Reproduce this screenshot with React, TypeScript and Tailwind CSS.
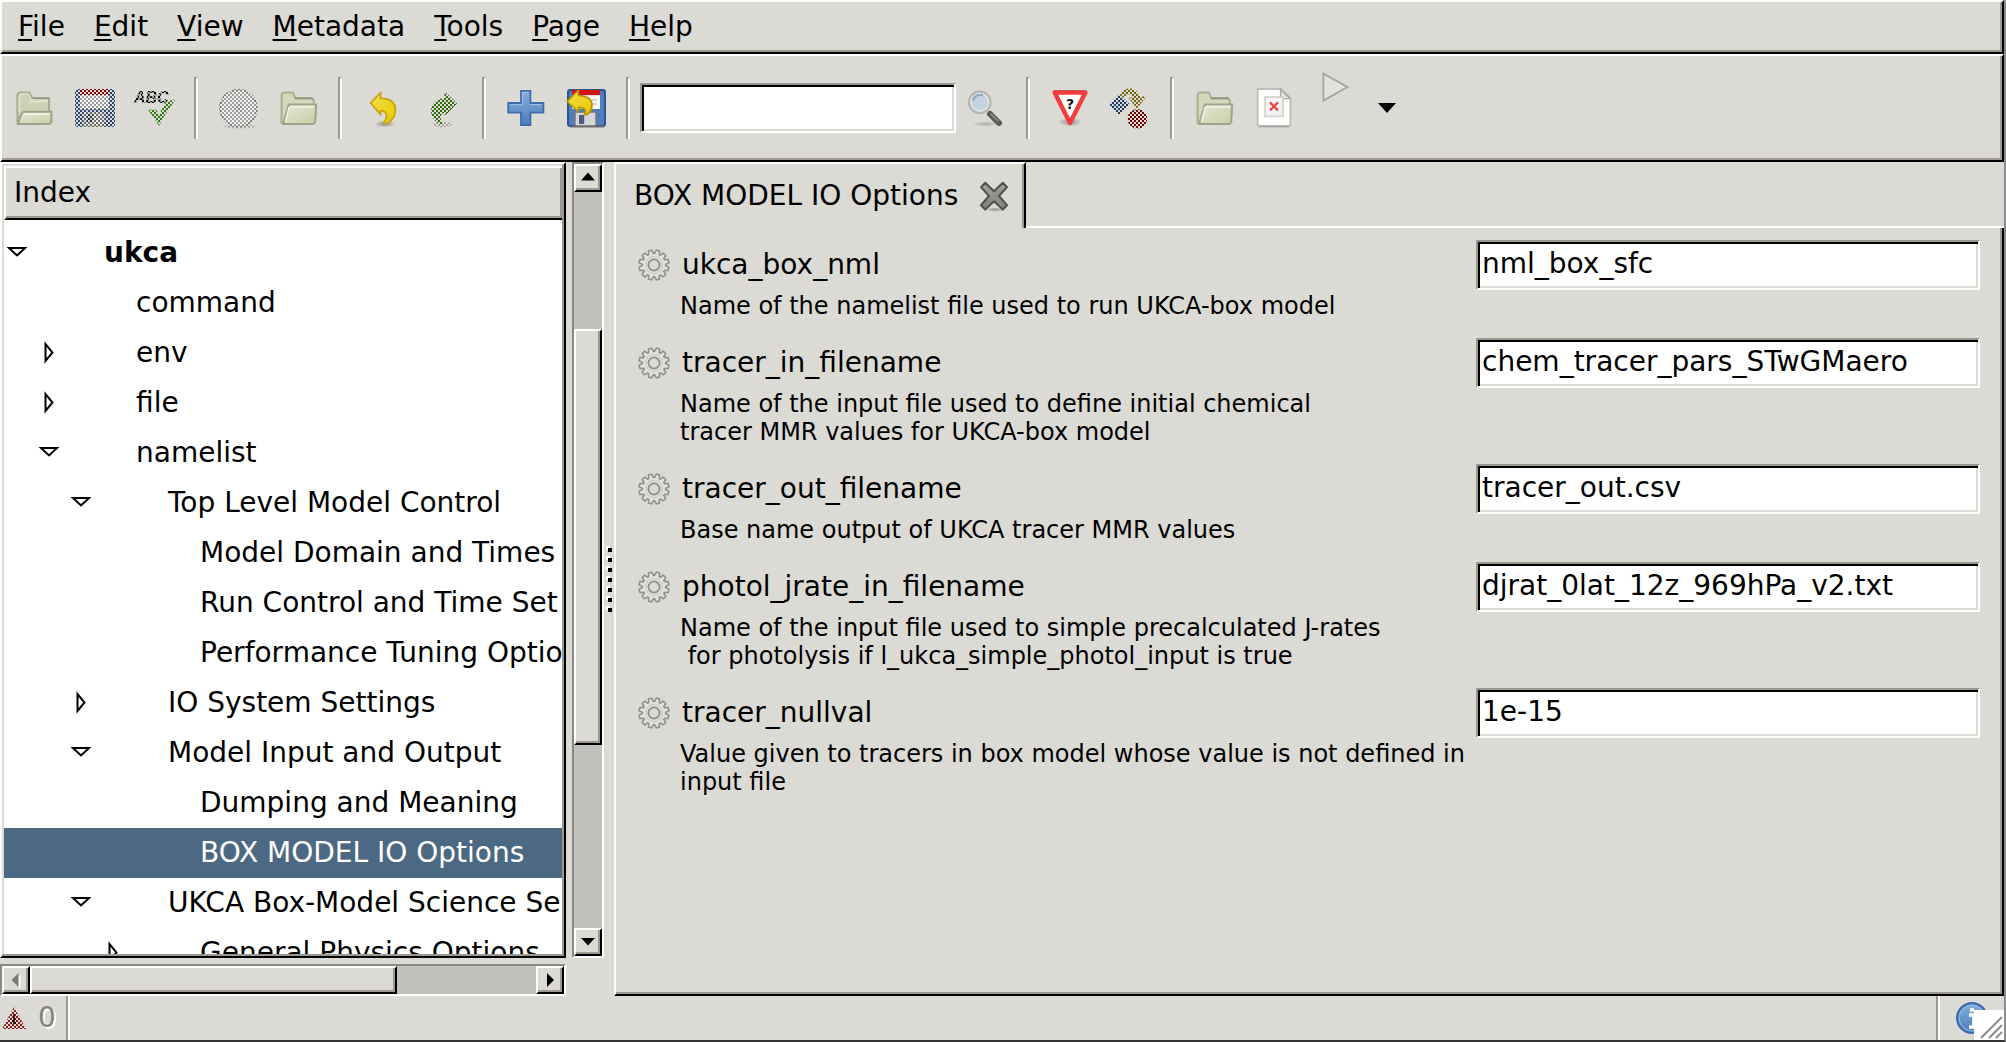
import type { ReactNode } from "react";
import clsx from "clsx";

const raised =
  "border-2 border-t-white border-l-white border-r-black border-b-black shadow-[inset_-2px_-2px_0_#9d988e] bg-[#dbdad5]";
const sunken =
  "border-2 border-t-[#9d988e] border-l-[#9d988e] border-r-white border-b-white shadow-[inset_2px_2px_0_#000,inset_-2px_-2px_0_#dbdad5] bg-white outline-none";

const menus = ["File", "Edit", "View", "Metadata", "Tools", "Page", "Help"];

type Node = { label: string; depth: number; state?: "open" | "closed"; bold?: boolean; selected?: boolean };

const tree: Node[] = [
  { label: "ukca", depth: 0, state: "open", bold: true },
  { label: "command", depth: 1 },
  { label: "env", depth: 1, state: "closed" },
  { label: "file", depth: 1, state: "closed" },
  { label: "namelist", depth: 1, state: "open" },
  { label: "Top Level Model Control", depth: 2, state: "open" },
  { label: "Model Domain and Times", depth: 3 },
  { label: "Run Control and Time Set", depth: 3 },
  { label: "Performance Tuning Optio", depth: 3 },
  { label: "IO System Settings", depth: 2, state: "closed" },
  { label: "Model Input and Output", depth: 2, state: "open" },
  { label: "Dumping and Meaning", depth: 3 },
  { label: "BOX MODEL IO Options", depth: 3, selected: true },
  { label: "UKCA Box-Model Science Se", depth: 2, state: "open" },
  { label: "General Physics Options", depth: 3, state: "closed" },
];

const indent = ["w-0", "w-8", "w-16", "w-24"];

const fields = [
  { name: "ukca_box_nml", value: "nml_box_sfc", help: "Name of the namelist file used to run UKCA-box model" },
  {
    name: "tracer_in_filename",
    value: "chem_tracer_pars_STwGMaero",
    help: "Name of the input file used to define initial chemical\ntracer MMR values for UKCA-box model",
  },
  { name: "tracer_out_filename", value: "tracer_out.csv", help: "Base name output of UKCA tracer MMR values" },
  {
    name: "photol_jrate_in_filename",
    value: "djrat_0lat_12z_969hPa_v2.txt",
    help: "Name of the input file used to simple precalculated J-rates\n for photolysis if l_ukca_simple_photol_input is true",
  },
  {
    name: "tracer_nullval",
    value: "1e-15",
    help: "Value given to tracers in box model whose value is not defined in\ninput file",
  },
];

// shared masks and gradients, referenced by id from the icons below
function Defs() {
  return (
    <svg width="0" height="0" className="absolute" aria-hidden="true">
      <defs>
        <pattern id="checker" width="2" height="2" patternUnits="userSpaceOnUse">
          <path d="M0 0h1v1h-1zM1 1h1v1h-1z" fill="#fff" shapeRendering="crispEdges" />
        </pattern>
        <mask id="dither" maskUnits="userSpaceOnUse" x="0" y="0" width="24" height="24">
          <rect width="24" height="24" fill="url(#checker)" />
        </mask>
        <linearGradient id="folder" x1="0" y1="0" x2="1" y2="1">
          <stop offset="0" stopColor="#e4e6d4" />
          <stop offset="1" stopColor="#c9cfa6" />
        </linearGradient>
        <linearGradient id="gold" x1="0" y1="0" x2="1" y2="1">
          <stop offset="0" stopColor="#f3e04e" />
          <stop offset="1" stopColor="#e8c800" />
        </linearGradient>
        <linearGradient id="blue" x1="0" y1="0" x2="0" y2="1">
          <stop offset="0" stopColor="#86aedb" />
          <stop offset="1" stopColor="#4a7dbb" />
        </linearGradient>
        <linearGradient id="steel" x1="0" y1="0" x2="0" y2="1">
          <stop offset="0" stopColor="#a0a39e" />
          <stop offset="1" stopColor="#7c807b" />
        </linearGradient>
        <radialGradient id="shade">
          <stop offset="0" stopColor="#000" stopOpacity="0.35" />
          <stop offset="1" stopColor="#000" stopOpacity="0" />
        </radialGradient>
      </defs>
    </svg>
  );
}

function Icon({ children }: { children: ReactNode }) {
  return (
    <svg viewBox="0 0 24 24" className="size-12" aria-hidden="true">
      {children}
    </svg>
  );
}

function FolderOpen() {
  return (
    <Icon>
      <path d="M3.7 19.5V5.2l1-1h5l1.4 2.9h8.4v9.4H3.7z" fill="#cdd2b2" stroke="#a9ad93" strokeWidth="1" />
      <path d="M4.6 14V6l.7-1h4l1.3 2.9h8v1H9.5" fill="none" stroke="#eceee0" strokeWidth=".5" />
      <path d="M11.5 7.200h8" stroke="#8d9279" strokeWidth=".8" />
      <path d="M6.6 13.9h14.1v5l-.9 1.1H4l1.3-4.2z" fill="url(#folder)" stroke="#9ea38b" strokeWidth="1" />
      <path d="M7.2 15h12.6" stroke="#f4f5ea" strokeWidth=".8" />
    </Icon>
  );
}

function Folder() {
  return (
    <Icon>
      <path d="M3.8 19.5V5.2l1-1h4.6l1.3 2.9h8l1.2 1V19.5z" fill="#d3d7bc" stroke="#a9ad93" strokeWidth="1" />
      <path d="M10.5 7.200h9" stroke="#8d9279" strokeWidth=".8" />
      <path d="M7.4 10.3h13.7l-.5 8.8-.9.9H4.6z" fill="url(#folder)" stroke="#9ea38b" strokeWidth="1" />
      <path d="M8 11.3h12M7.6 11.5L5.8 18.8" stroke="#f2f3e6" strokeWidth=".8" fill="none" />
    </Icon>
  );
}

function FloppyBody() {
  return (
    <>
      <rect x="3" y="3" width="18.5" height="18" rx="1" fill="#4e7ec0" stroke="#2d568f" strokeWidth="1" />
      <rect x="5" y="3" width="14" height="2.6" fill="#d80f0f" />
      <rect x="5" y="5.6" width="14" height="6.9" fill="#f7f7f7" />
      <path d="M6.5 8h11M6.5 10h11" stroke="#c9c9c9" strokeWidth=".8" />
      <rect x="6.5" y="14" width="10.5" height="7" rx=".6" fill="#d6d6d6" stroke="#777" strokeWidth=".7" />
      <rect x="8.5" y="15.5" width="2.6" height="4.5" fill="#4a5f80" />
      <path d="M4 21.3h17" stroke="#6e6e6e" strokeWidth=".8" />
    </>
  );
}

function Save() {
  return (
    <Icon>
      <path d="M5 5.500h14.500v7H5z" fill="#fff" opacity=".8" />
      <path d="M11.500 15h5v5.500h-5z" fill="#fff" opacity=".5" />
      <g mask="url(#dither)">
        <rect x="3" y="3" width="19" height="18" rx="1" fill="#26466f" stroke="#26466f" strokeWidth="1" />
        <rect x="5" y="2.5" width="14.5" height="3" fill="#7c0404" />
        <rect x="5" y="5.5" width="14.5" height="7" fill="#999" />
        <rect x="6.5" y="14" width="11" height="7.5" rx="1" fill="#6c6c6c" />
        <rect x="8.5" y="15" width="3" height="4" fill="#1c3350" />
      </g>
    </Icon>
  );
}

function SpellCheck() {
  return (
    <Icon>
      <text x="2" y="9.300" fontFamily="Liberation Sans, sans-serif" fontSize="8" fontStyle="italic" fontWeight="bold" fill="#555" opacity=".5">
        ABC
      </text>
      <g mask="url(#dither)">
        <text x="2" y="9.300" fontFamily="Liberation Sans, sans-serif" fontSize="8" fontStyle="italic" fontWeight="bold" fill="#000">
          ABC
        </text>
        <path d="M9.8 13.2h3l1.7 3.2 3.6-6.9 3.7-1.3-6 9-1.3 2.8z" fill="#2f7a0c" stroke="#2f7a0c" strokeWidth=".9" />
      </g>
    </Icon>
  );
}

function Disc() {
  return (
    <Icon>
      <circle cx="12.2" cy="12.1" r="9" fill="#fff" opacity=".6" />
      <g mask="url(#dither)">
        <ellipse cx="13" cy="21.3" rx="8" ry=".9" fill="#aaa" />
        <circle cx="12.2" cy="12.1" r="9.2" fill="#a0a0a0" stroke="#707070" strokeWidth=".8" />
        <circle cx="12.2" cy="12.1" r="2" fill="#888" />
      </g>
    </Icon>
  );
}

function Undo() {
  return (
    <Icon>
      <ellipse cx="13.5" cy="20" rx="5.5" ry="1.8" fill="url(#shade)" />
      <path
        d="M6.3 9.5l5-5.2v2.9c5 0 7.400 2 7.400 5.800 0 3.200-1.500 5.200-4 6.700l-2-.3c2.200-2.400 2.300-6.100-1.400-6.100v2z"
        fill="url(#gold)"
        stroke="#c9a40c"
        strokeWidth=".9"
        strokeLinejoin="round"
      />
    </Icon>
  );
}

function Redo() {
  return (
    <Icon>
      <g mask="url(#dither)">
        <ellipse cx="12" cy="20.300" rx="5" ry="1.400" fill="#aaa" />
        <path
          d="M19.300 9.700l-5.800-5.700v3.200c-4.500.4-6.800 3-6.700 6.500 0 2.800 1.700 4.800 4 6.300l1.200-.2c-1.300-2.300-1.500-5.300 1.500-5.800v1.500z"
          fill="#2f6a0c"
          stroke="#2f6a0c"
          strokeWidth=".5"
        />
      </g>
    </Icon>
  );
}

function Add() {
  return (
    <Icon>
      <path
        d="M9.500 3.400h4.700v6.100h6.500v4.800h-6.500v6.300h-4.700v-6.300h-6.400v-4.800h6.400z"
        fill="url(#blue)"
        stroke="#3d6cab"
        strokeWidth=".9"
      />
      <path d="M10.300 4.200h3M4 10.300h6.200v-6M14 10.300h6" stroke="#a3c1e6" strokeWidth=".5" fill="none" />
    </Icon>
  );
}

function Revert() {
  return (
    <Icon>
      <FloppyBody />
      <path
        d="M2.500 8.700l5.700-5.700v2.700c4.500.3 6.800 2 6.800 5 0 2-1 3.600-2.800 4.700h-1c1-2 .8-3.700-3-3.700v2.300z"
        fill="url(#gold)"
        stroke="#b59207"
        strokeWidth=".8"
        strokeLinejoin="round"
      />
    </Icon>
  );
}

function Search() {
  return (
    <Icon>
      <ellipse cx="12" cy="20" rx="7" ry="1.500" fill="url(#shade)" opacity=".6" />
      <path d="M14 15l4.500 4.500" stroke="#565b56" strokeWidth="3" strokeLinecap="round" />
      <path d="M14.500 15l3.500 3.500" stroke="#90948f" strokeWidth=".8" strokeLinecap="round" />
      <circle cx="8.900" cy="9.200" r="5.300" fill="#c4d3e2" stroke="#b4b5b0" strokeWidth="1.200" />
      <circle cx="8.900" cy="9.200" r="4.400" fill="none" stroke="#e4e5e2" strokeWidth=".8" />
      <path d="M5.500 8.500a3.500 3.500 0 0 1 5-2.700" stroke="#8fa3b8" strokeWidth="1" fill="none" />
    </Icon>
  );
}

function Validate() {
  return (
    <Icon>
      <ellipse cx="12" cy="19" rx="6" ry="2.200" fill="url(#shade)" />
      <path d="M4.300 4.300h15.400l-7.700 15.200z" fill="#fff" stroke="#f53b3b" strokeWidth="2.200" strokeLinejoin="round" />
      <path d="M3.700 3.300h16.600" stroke="#b33" strokeWidth=".6" opacity=".6" />
      <text x="12" y="12.400" textAnchor="middle" fontFamily="DejaVu Sans, sans-serif" fontSize="7" fontWeight="bold" fill="#111">
        ?
      </text>
    </Icon>
  );
}

function Transform() {
  return (
    <Icon>
      <g mask="url(#dither)">
        <path d="M6.500 5l5.500 5.300-5.500 5.200-5-5.200z" fill="#1d3c63" />
        <path d="M7 5.500c2-4.500 8-4.500 10 .7h3.200l-4.700 6-4.300-5.300 2.300-.3c-1-2-3-2-4.500.3z" fill="#75640a" />
        <circle cx="15.700" cy="17.400" r="4.900" fill="#6c0404" />
      </g>
    </Icon>
  );
}

function Missing() {
  return (
    <Icon>
      <path d="M4 2.500h11.500l4.700 4.500v13.300l-.7.700H4.500l-.7-.7V2.500z" fill="#fff" stroke="#bdbdb9" strokeWidth=".9" />
      <path d="M4.500 21.300h15" stroke="#a4a4a0" strokeWidth=".7" />
      <path d="M15.300 2.700v4.600h4.700z" fill="#e4e4e2" stroke="#a9a9a5" strokeWidth=".7" />
      <rect x="7.500" y="6.500" width="9" height="9.700" fill="#f3f3f3" stroke="#cfcfcb" strokeWidth=".8" />
      <path d="M10 9.200l4 4M14 9.200l-4 4" stroke="#f04545" strokeWidth="1.100" />
    </Icon>
  );
}

function Play() {
  return (
    <Icon>
      <path d="M6.700 4.800v13.500l12-6.800z" fill="#e2e2df" stroke="#a5a5a0" strokeWidth=".9" />
    </Icon>
  );
}

function Gear() {
  const teeth = Array.from({ length: 12 }, (_, i) => i * 30);
  return (
    <svg viewBox="0 0 16 16" className="size-8" aria-hidden="true">
      {teeth.map((a) => (
        <path key={a} d="M6.600 2.800l.6-2.300h1.600l.6 2.300" fill="#e0e0dd" stroke="#91918b" strokeWidth=".8" transform={`rotate(${a + 15} 8 8)`} />
      ))}
      <circle cx="8" cy="8" r="5.400" fill="#e0e0dd" />
      <circle cx="8" cy="8" r="4.200" fill="none" stroke="#cbcbc6" strokeWidth=".6" />
      <circle cx="8" cy="8" r="2.800" fill="#dbdad5" stroke="#8f8f89" strokeWidth=".9" />
    </svg>
  );
}

function Close() {
  return (
    <svg viewBox="0 0 16 16" className="size-8" aria-hidden="true">
      <ellipse cx="8.500" cy="14.800" rx="5" ry="1.200" fill="url(#shade)" />
      <path
        d="M3.600 1.400L8 5.600l4.400-4.200 2.100 2.200-4 4.400 4 4.600-2.100 2.200L8 10.600l-4.400 4.200-2.100-2.200 4-4.600-4-4.400z"
        fill="url(#steel)"
        stroke="#4d524f"
        strokeWidth="1"
        strokeLinejoin="round"
      />
    </svg>
  );
}

function Triangle({ dir, muted }: { dir: "up" | "down" | "left" | "right"; muted?: boolean }) {
  const paths = {
    up: "M7 .5l7 8H0z",
    down: "M7 9.500l7-7.500H0z",
    left: "M2.500 6l7-7v14z",
    right: "M11 6l-7-7v14z",
  };
  return (
    <svg viewBox="0 0 14 12" className="h-3 w-[14px] overflow-visible" aria-hidden="true">
      {muted && <path d={paths[dir]} fill="#fff" transform="translate(2 2)" />}
      <path d={paths[dir]} fill={muted ? "#7d7a74" : "#000"} />
    </svg>
  );
}

function Expander({ state }: { state: "open" | "closed" }) {
  return (
    <svg viewBox="0 0 24 24" className="size-6" aria-hidden="true">
      <path
        d={state === "open" ? "M4 7h16l-8 7.500z" : "M8.500 3v17l7-8.500z"}
        fill="#fff"
        stroke="#000"
        strokeWidth="2"
      />
    </svg>
  );
}

function Separator() {
  return (
    <div className="flex h-[62px] w-6 shrink-0 justify-center">
      <div className="w-1 border-t-2 border-l-2 border-r-2 border-t-[#9d988e] border-l-[#9d988e] border-r-white" />
    </div>
  );
}

function Tool({ label, children }: { label: string; children: ReactNode }) {
  return (
    <button type="button" aria-label={label} className="flex w-[60px] shrink-0 justify-center">
      {children}
    </button>
  );
}

function Toolbar() {
  return (
    <div className={clsx(raised, "flex h-[108px] items-center pl-[2px]")}>
      <Tool label="Open"><FolderOpen /></Tool>
      <Tool label="Save"><Save /></Tool>
      <Tool label="Check and save"><SpellCheck /></Tool>
      <Separator />
      <Tool label="Load all"><Disc /></Tool>
      <Tool label="Browse files"><Folder /></Tool>
      <Separator />
      <Tool label="Undo"><Undo /></Tool>
      <Tool label="Redo"><Redo /></Tool>
      <Separator />
      <Tool label="Add"><Add /></Tool>
      <Tool label="Revert"><Revert /></Tool>
      <Separator />
      <input type="text" aria-label="Find" className={clsx(sunken, "h-[50px] w-[316px] px-2")} />
      <Tool label="Find next"><Search /></Tool>
      <Separator />
      <Tool label="Check fail-if"><Validate /></Tool>
      <Tool label="Auto-fix"><Transform /></Tool>
      <Separator />
      <Tool label="View output"><Folder /></Tool>
      <Tool label="View log"><Missing /></Tool>
      <div className="self-start pt-2">
        <Tool label="Run suite"><Play /></Tool>
      </div>
      <button type="button" aria-label="Run options" className="flex w-[46px] justify-center">
        <svg viewBox="0 0 18 10" className="h-[10px] w-[18px]" aria-hidden="true">
          <path d="M0 0h18l-9 10z" />
        </svg>
      </button>
    </div>
  );
}

function ScrollButton({ label, children }: { label: string; children: ReactNode }) {
  return (
    <button type="button" aria-label={label} className={clsx(raised, "flex size-7 shrink-0 items-center justify-center")}>
      {children}
    </button>
  );
}

const trough = "border-2 border-t-[#8a8882] border-l-[#8a8882] border-r-white border-b-white bg-[#c3c1bb]";

function IndexPane() {
  return (
    <aside className="grid w-[604px] shrink-0 grid-cols-[minmax(0,1fr)_32px] grid-rows-[minmax(0,1fr)_32px] gap-[6px]">
      <div className={clsx(raised, "flex min-h-0 flex-col p-[2px]")}>
        <div className={clsx(raised, "h-[54px] shrink-0 border-r-0 px-2 leading-[50px]")}>Index</div>
        <ul className="min-h-0 flex-1 overflow-hidden bg-white pt-2">
          {tree.map((node) => (
            <li
              key={node.label}
              className={clsx("flex h-[50px] items-center whitespace-nowrap", node.selected && "bg-[#4b6983] text-white", node.bold && "font-bold")}
            >
              <span className={clsx("shrink-0", indent[node.depth])} />
              <span className="flex w-[100px] shrink-0 pl-[1px]">
                {node.state && (
                  <button type="button" aria-label={`Toggle ${node.label}`}>
                    <Expander state={node.state} />
                  </button>
                )}
              </span>
              <span>{node.label}</span>
            </li>
          ))}
        </ul>
      </div>
      <div className={clsx(trough, "flex flex-col")}>
        <ScrollButton label="Scroll up"><Triangle dir="up" /></ScrollButton>
        <div className="grow-[138] basis-0" />
        <div className={clsx(raised, "grow-[414] basis-0")} />
        <div className="grow-[184] basis-0" />
        <ScrollButton label="Scroll down"><Triangle dir="down" /></ScrollButton>
      </div>
      <div className={clsx(trough, "flex")}>
        <ScrollButton label="Scroll left"><Triangle dir="left" muted /></ScrollButton>
        <div className={clsx(raised, "grow-[366] basis-0")} />
        <div className="grow-[140] basis-0" />
        <ScrollButton label="Scroll right"><Triangle dir="right" /></ScrollButton>
      </div>
    </aside>
  );
}

function Handle() {
  return (
    <div className="flex w-[10px] shrink-0 flex-col items-center justify-center gap-1">
      {[0, 1, 2, 3, 4, 5, 6].map((i) => (
        <svg key={i} viewBox="0 0 6 6" className="size-[6px]" aria-hidden="true">
          <path d="M0 0h4v4h-4z" fill="#fff" />
          <path d="M2 2h4v4h-4z" />
        </svg>
      ))}
    </div>
  );
}

function Field({ name, value, help }: { name: string; value: string; help: string }) {
  return (
    <div className="grid grid-cols-[minmax(0,1fr)_504px] pt-[10px] pb-2">
      <div className="flex items-center gap-3 pl-[22px]">
        <button type="button" aria-label={`${name} menu`}>
          <Gear />
        </button>
        <label htmlFor={name}>{name}</label>
      </div>
      <input id={name} type="text" defaultValue={value} className={clsx(sunken, "h-[50px] w-full px-1 pb-1")} />
      <p className="pt-[2px] pl-16 text-[24px] leading-7 whitespace-pre">{help}</p>
    </div>
  );
}

function Notebook() {
  return (
    <main className="flex min-w-0 flex-1 flex-col">
      <div className="flex h-[66px] shrink-0">
        <div className="flex items-center gap-5 border-t-2 border-r-2 border-l-2 border-t-white border-r-black border-l-white pr-[14px] pl-[18px] shadow-[inset_-2px_0_0_#9d988e]">
          <span>BOX MODEL IO Options</span>
          <button type="button" aria-label="Close tab">
            <Close />
          </button>
        </div>
        <div className="flex-1 border-b-2 border-b-white" />
      </div>
      <div className="min-h-0 flex-1 border-r-2 border-b-2 border-l-2 border-r-black border-b-black border-l-white pt-[2px] pr-[22px] shadow-[inset_-2px_-2px_0_#9d988e]">
        {fields.map((field) => (
          <Field key={field.name} {...field} />
        ))}
      </div>
    </main>
  );
}

function StatusBar() {
  return (
    <footer className="flex h-11 shrink-0">
      <div className="flex w-[70px] items-center gap-3 border-r-2 border-r-white pl-[2px] shadow-[inset_-2px_0_0_#9d988e]">
        <svg viewBox="0 0 12 12" className="size-6" aria-hidden="true">
          <g mask="url(#dither)">
            <path d="M6 .5l6 11H0z" fill="#8a1c1c" />
            <path d="M6 4l1.500 5h-3z" />
          </g>
          <path d="M6 4v5" stroke="#300" strokeWidth=".8" />
        </svg>
        <span className="text-[#85827c] [text-shadow:2px_2px_0_#fff]">0</span>
      </div>
      <div className="flex-1" />
      <div className="relative flex w-[68px] items-center border-l-2 border-l-[#9d988e] pl-[18px] shadow-[inset_2px_0_0_#fff]">
        <svg viewBox="0 0 16 16" className="size-8" aria-hidden="true">
          <circle cx="8" cy="8" r="7.400" fill="url(#blue)" stroke="#3a6cb0" strokeWidth="1.200" />
          <circle cx="8" cy="8" r="6.400" fill="none" stroke="#8fb4e0" strokeWidth=".6" />
          <path d="M6.500 6.500h2.500v6M7 4h2M6.500 12.500h4" stroke="#fff" strokeWidth="1.800" fill="none" />
        </svg>
        <svg viewBox="0 0 30 30" className="absolute right-0 bottom-0 size-[30px]" aria-hidden="true">
          <path d="M0 0h30v30H0z" fill="#fff" />
          <path d="M7 28L28 7M15 28l13-13M22 28l6-6" stroke="#8f8c86" strokeWidth="2" />
        </svg>
      </div>
    </footer>
  );
}

export default function App() {
  return (
    <div className="flex h-screen flex-col overflow-hidden border-r-2 border-b-2 border-r-[#8b8b8b] border-b-[#333] bg-[#dbdad5] font-['DejaVu_Sans',sans-serif] text-[28px] leading-8 text-black">
      <Defs />
      <nav className={clsx(raised, "flex h-[54px] shrink-0 items-center gap-[29px] px-4")}>
        {menus.map((menu) => (
          <button key={menu} type="button">
            <span className="underline decoration-2 underline-offset-[3px]">{menu[0]}</span>
            {menu.slice(1)}
          </button>
        ))}
      </nav>
      <Toolbar />
      <div className="flex min-h-0 flex-1">
        <IndexPane />
        <Handle />
        <Notebook />
      </div>
      <StatusBar />
    </div>
  );
}
